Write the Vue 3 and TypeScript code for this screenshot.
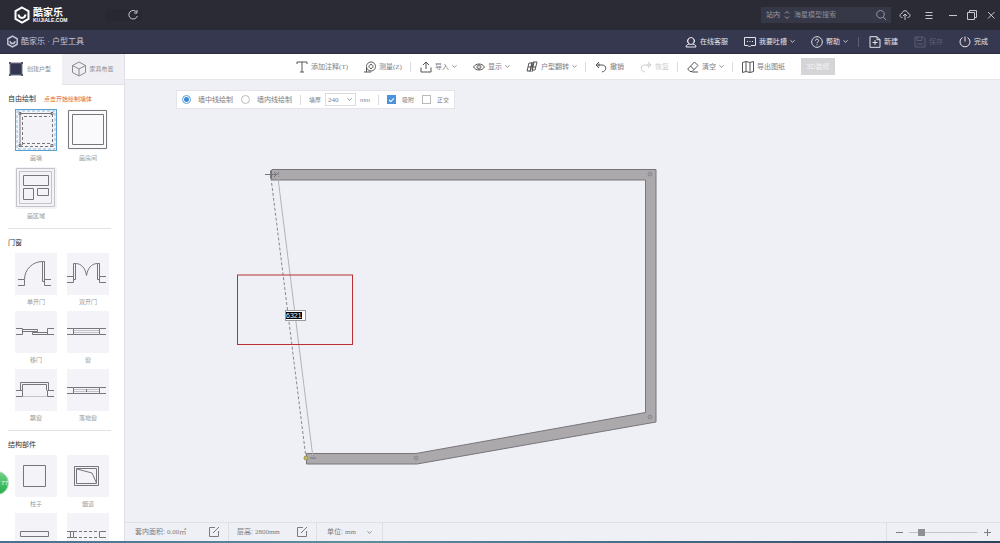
<script setup lang="ts">
import { onMounted, ref } from 'vue'

interface Action {
  id: string
  label?: string
  key?: string
  icon?: string
  menu?: boolean
  disabled?: boolean
  divider?: boolean
}

interface Part {
  label: string
  solid?: string
  dashed?: string
  soft?: string
  selected?: boolean
  plain?: boolean
}

interface Section {
  title: string
  hint?: string
  parts: Part[]
}

const headerActions: Action[] = [
  { id: 'service', label: '在线客服', icon: 'M3 4.500a3 3 0 0 1 6 0v1a3 3 0 0 1-6 0zM2.500 3.500v3M9.500 3.500v3M4.500 8C2 8.500 1 9.500 1 11h10c0-1.500-1-2.500-3.500-3' },
  { id: 'feedback', label: '我要吐槽', menu: true, icon: 'M.5 1.500h11v8H7l-1.500 1.500L4 9.500H.5zM3 5.500h1M5.500 5.500h1M8 5.500h1' },
  { id: 'help', label: '帮助', menu: true, icon: 'M6 .7a5.300 5.300 0 1 0 .01 0zM4.400 4.700c0-2 3.200-2 3.200 0 0 1.200-1.600 1.100-1.600 2.500M6 8.200v1' },
  { id: 'd', divider: true },
  { id: 'new', label: '新建', icon: 'M1 .7h7l3 3v7.600H1zM8 .7v3h3M3.500 6.500h5M6 4v5' },
  { id: 'save', label: '保存', disabled: true, icon: 'M1 1h8.500L11 2.500V11H1zM3 1v3.500h5V1M3 8h6' },
  { id: 'done', label: '完成', icon: 'M3.500 1.500a5 5 0 1 0 5 0M6 .5v5' },
]

const tools: Action[] = [
  { id: 'note', label: '添加注释', key: '(T)', icon: 'M1 3V1h10v2M6 1v10M4 11h4' },
  { id: 'measure', label: '测量', key: '(Z)', icon: 'M7 1a4.500 4.500 0 1 0 .01 0zM7 3.500a2 2 0 1 0 .01 0zM0 11h7M2.500 6v5' },
  { id: 'd1', divider: true },
  { id: 'import', label: '导入', menu: true, icon: 'M6 8V1M3 4l3-3 3 3M1 6.500V11h10V6.500' },
  { id: 'show', label: '显示', menu: true, icon: 'M.5 6C3 2 9 2 11.500 6 9 10 3 10 .5 6zM6 4a2 2 0 1 0 .01 0zM6 5.500v1' },
  { id: 'flip', label: '户型翻转', menu: true, icon: 'M3 2h3L4 10H1zM7 1h4L9 9H6zM6 1L4 11M8 1L6 11M2 6h8' },
  { id: 'd2', divider: true },
  { id: 'undo', label: '撤销', icon: 'M4 1L1 4l3 3M1 4h6c5 0 5 6 0 7M4 2.500V5.500' },
  { id: 'redo', label: '恢复', disabled: true, icon: 'M8 1l3 3-3 3M11 4H5c-5 0-5 6 0 7M8 2.500V5.500' },
  { id: 'd3', divider: true },
  { id: 'clear', label: '清空', menu: true, icon: 'M7.500 1L11 4.500 5 10.500H3L.7 8zM3.500 5L7 8.500M5 11h6' },
  { id: 'd4', divider: true },
  { id: 'export', label: '导出图纸', icon: 'M.5 1.500l3.500-1 4 1 3.500-1v10l-3.500 1-4-1-3.500 1zM4 .5v10M8 1.500v10' },
]

const sections: Section[] = [
  {
    title: '自由绘制',
    hint: '点击开始绘制墙体',
    parts: [
      { label: '画墙', selected: true, solid: 'M5 37V4.500h32M4 3.500h2v2h-2zM36 3.500h2v2h-2zM4 35.500h2v2h-2zM36 35.500h2v2h-2z', dashed: 'M7.500 36V7.500H35M35 34.500H7M37.500 5v31M5 37.500h32' },
      { label: '画房间', plain: true, solid: 'M1.500 1.500h38v38h-38zM5.500 5.500h31v30h-31z' },
      { label: '画区域', soft: 'M1.500 1.500h38v38h-38zM4.500 4.500h32v32h-32z', solid: 'M8.500 8.500h25v10h-25zM8.500 21.500h10v11h-10zM22.500 21.500h11v7h-11z' },
    ],
  },
  {
    title: '门窗',
    parts: [
      { label: '单开门', solid: 'M3 26.500h6.500v6H3M36 26.500h-6.500v6H36M9.500 26.500c0-10 8-18 18-18M27.500 8.500h2v20h-2z' },
      { label: '双开门', solid: 'M0 23.500h6.500v6H0M39 23.500h-6.500v6H39M6.500 10.500h2v16h-2zM30.500 10.500h2v16h-2zM8.500 10.500c6 0 10 5 11 12 1-7 5-12 11-12' },
      { label: '移门', solid: 'M1 17.500h6.500v6H1M39 17.500h-6.500v6H39M7.500 18.500h15v2h-15zM17.500 21.500h15v2h-15z' },
      { label: '窗', solid: 'M0 17.500h6.500v6H0M39 17.500h-6.500v6H39M6.500 17.500h26M6.500 23.500h26', soft: 'M7 19.500h25M7 21.500h25' },
      { label: '飘窗', solid: 'M1 21.500h6.500v6H1M39 21.500h-6.500v6H39M5.500 21.500v-8h28v8M7.500 21.500v-6h24v6', soft: 'M8 27.500h24' },
      { label: '落地窗', solid: 'M0 18.500h6.500v6H0M39 18.500h-6.500v6H39M6.500 18.500h26M6.500 24.500h26M19.500 20v3', soft: 'M7 20.500h25M7 22.500h25' },
    ],
  },
  {
    title: '结构部件',
    parts: [
      { label: '柱子', solid: 'M8.500 10.500h22v21h-22z' },
      { label: '烟道', solid: 'M7.500 11.500h24v19h-24zM9.500 13.500h20v15h-20zM10 14l15 4 4.500 10' },
      { label: '', solid: 'M5.500 18.500h28v5h-28z' },
      { label: '', solid: 'M0 18.500h6.500v6H0M3.500 18.500v6M39 18.500h-6.500v6H39', dashed: 'M7 18.500h25M7 24.500h25' },
    ],
  },
]

const lengthInput = ref<HTMLInputElement | null>(null)
const wallLength = ref('6321')
const drawMode = ref('center')
const snap = ref(true)
const ortho = ref(false)
const zoomLevel = ref(15)

onMounted(() => {
  lengthInput.value?.focus()
  lengthInput.value?.select()
})
</script>

<template>
  <div class="app">
    <header class="topbar">
      <div class="brand">
        <svg class="brand-mark" viewBox="0 0 18 18"><path d="M9 1.500l6.500 3.700v7.600L9 16.500l-6.500-3.700V5.200z" /><path d="M5.500 8.500c.5 4.500 6.500 4.500 7 0" /></svg>
        <div class="brand-text"><strong>酷家乐</strong><span>KUJIALE.COM</span></div>
      </div>
      <div class="nav">
        <button class="icon-btn" aria-label="刷新"><svg viewBox="0 0 12 12"><path d="M9.500 3a4.300 4.300 0 1 0 .8 4M10 1v3H7" /></svg></button>
      </div>
      <div class="search">
        <select aria-label="搜索范围"><option>站内</option></select>
        <svg class="updown" viewBox="0 0 6 10"><path d="M1 3.500l2-2 2 2M1 6.500l2 2 2-2" /></svg>
        <input type="text" placeholder="海星模型搜索" aria-label="搜索">
        <button class="icon-btn" aria-label="查找"><svg viewBox="0 0 12 12"><path d="M5.500 1.500a3.800 3.800 0 1 0 .01 0zM8.300 8l2.700 3" /></svg></button>
      </div>
      <div class="window-buttons">
        <button class="icon-btn wide" aria-label="上传"><svg viewBox="0 0 12 12"><path d="M3.500 8.500C0 8.500.5 4.500 3 4.500 3.500.8 8.500.8 9 4.500c2.500 0 3 4-.5 4M6 11V5M4 7l2-2 2 2" /></svg></button>
        <button class="icon-btn wide" aria-label="菜单"><svg viewBox="0 0 12 12"><path d="M2.500 3.500h7M2.500 6.500h7M2.500 9.500h7" /></svg></button>
        <button class="icon-btn" aria-label="最小化"><svg viewBox="0 0 12 12"><path d="M2 6.500h8" /></svg></button>
        <button class="icon-btn" aria-label="还原"><svg viewBox="0 0 12 12"><path d="M1.500 3.500h7v7h-7zM3.500 3.500v-2h7v7h-2" /></svg></button>
        <button class="icon-btn" aria-label="关闭"><svg viewBox="0 0 12 12"><path d="M3 3l6.500 6.500M9.500 3L3 9.500" /></svg></button>
      </div>
    </header>

    <div class="titlebar">
      <h1>
        <svg class="title-mark" viewBox="0 0 18 18"><path d="M9 1.500l6.500 3.700v7.600L9 16.500l-6.500-3.700V5.200z" /><path d="M5.500 8.500c.5 4.500 6.500 4.500 7 0" /></svg>
        <span>酷家乐 · 户型工具</span>
      </h1>
      <nav class="actions">
        <template v-for="a in headerActions" :key="a.id">
          <i v-if="a.divider" class="divider" />
          <button v-else class="action" :disabled="a.disabled">
            <svg class="icon" viewBox="0 0 12 12"><path :d="a.icon" /></svg>
            <span>{{ a.label }}</span>
            <svg v-if="a.menu" class="chevron" viewBox="0 0 6 6"><path d="M.5 1.500L3 4l2.500-2.500" /></svg>
          </button>
        </template>
      </nav>
    </div>

    <div class="workspace">
      <aside class="sidebar">
        <div class="tabs">
          <button class="tab active">
            <svg viewBox="0 0 16 16"><path class="room" d="M2 2h12v12H2z" /><path class="corners" d="M1 1h2v2H1zM13 1h2v2h-2zM1 13h2v2H1zM13 13h2v2h-2z" /></svg>
            <span>创建户型</span>
          </button>
          <button class="tab">
            <svg viewBox="0 0 16 16"><path class="cube" d="M8 1l6.500 3.500v7L8 15l-6.500-3.500v-7zM1.500 4.500L8 8l6.500-3.500M8 8v7" /></svg>
            <span>家具布置</span>
          </button>
        </div>
        <section v-for="s in sections" :key="s.title" class="section">
          <div class="section-head"><h2>{{ s.title }}</h2><span v-if="s.hint" class="hint">{{ s.hint }}</span></div>
          <div class="parts">
            <button v-for="(p, i) in s.parts" :key="i" class="part">
              <svg viewBox="0 0 42 42" :class="{ plain: p.plain }">
                <rect v-if="p.selected" class="outline" x=".5" y=".5" width="41" height="41" />
                <rect v-if="p.selected" class="outline-dash" x="2" y="2" width="38" height="38" />
                <path v-if="p.soft" class="soft" :d="p.soft" />
                <path v-if="p.solid" :d="p.solid" />
                <path v-if="p.dashed" class="dashed" :d="p.dashed" />
              </svg>
              <span>{{ p.label }}</span>
            </button>
          </div>
        </section>
        <div class="ball">77</div>
      </aside>

      <main class="main">
        <div class="toolbar">
          <template v-for="t in tools" :key="t.id">
            <i v-if="t.divider" class="divider" />
            <button v-else class="tool" :disabled="t.disabled">
              <svg class="icon" viewBox="0 0 12 12"><path :d="t.icon" /></svg>
              <span>{{ t.label }}<b v-if="t.key">{{ t.key }}</b></span>
              <svg v-if="t.menu" class="chevron" viewBox="0 0 6 6"><path d="M.5 1.500L3 4l2.500-2.500" /></svg>
            </button>
          </template>
          <button class="decorate" disabled>3D装修</button>
        </div>

        <div class="canvas">
          <svg class="plan" viewBox="125 80 875 442" preserveAspectRatio="xMinYMin slice">
            <path class="wall" d="M272 169.500H656V422L417 464H306.500V453.500H416L645.500 412.500V180H272L270.500 178V171z" />
            <g class="joint">
              <circle cx="650" cy="174" r="2" /><circle cx="650" cy="417" r="2" /><circle cx="416" cy="458" r="2" />
            </g>
            <path class="cursor" d="M265 174.500h14M271.500 170v9M274 172l5 5M279 172l-5 5M310 458h6M313 455v4" />
            <path class="guide-dash" d="M271 178L306 458" />
            <path class="guide" d="M277.500 174L313 458" />
            <circle class="anchor" cx="306" cy="458" r="2" />
            <rect class="mark" x="237.500" y="275" width="115" height="69.500" />
          </svg>
          <input ref="lengthInput" v-model="wallLength" class="length" type="text" aria-label="墙体长度">

          <div class="options">
            <label class="radio"><input v-model="drawMode" type="radio" name="mode" value="center"><span>墙中线绘制</span></label>
            <label class="radio"><input v-model="drawMode" type="radio" name="mode" value="inner"><span>墙内线绘制</span></label>
            <i class="divider" />
            <label class="thickness">
              <span>墙厚</span>
              <span class="select-box">
                <select><option>240</option></select>
                <svg class="chevron" viewBox="0 0 6 6"><path d="M.5 1.500L3 4l2.500-2.500" /></svg>
              </span>
              <span>mm</span>
            </label>
            <i class="divider" />
            <label class="check"><input v-model="snap" type="checkbox"><span>吸附</span></label>
            <label class="check"><input v-model="ortho" type="checkbox"><span>正交</span></label>
          </div>
        </div>

        <footer class="status">
          <div class="cell area">
            <span>套内面积: <b>0.00㎡</b></span>
            <button class="icon-btn" aria-label="编辑面积"><svg viewBox="0 0 12 12"><path d="M7 1.500H1.500v9h9V5M5 7l6-6" /></svg></button>
          </div>
          <div class="cell height">
            <span>层高: <b>2800mm</b></span>
            <button class="icon-btn" aria-label="编辑层高"><svg viewBox="0 0 12 12"><path d="M7 1.500H1.500v9h9V5M5 7l6-6" /></svg></button>
          </div>
          <label class="cell units">
            <span>单位:</span>
            <select><option>mm</option></select>
            <svg class="chevron" viewBox="0 0 6 6"><path d="M.5 1.500L3 4l2.500-2.500" /></svg>
          </label>
          <div class="zoom">
            <button class="icon-btn" aria-label="缩小"><svg viewBox="0 0 12 12"><path d="M3 6.500h7" /></svg></button>
            <input v-model="zoomLevel" type="range" min="0" max="100" aria-label="缩放">
            <button class="icon-btn" aria-label="放大"><svg viewBox="0 0 12 12"><path d="M3 6.500h7M6.500 3v7" /></svg></button>
          </div>
        </footer>
      </main>
    </div>
    <div class="edge" />
  </div>
</template>

<style>
body {
  margin: 0;
  overflow: hidden;
}
</style>

<style scoped>
.app {
  display: flex;
  flex-direction: column;
  height: 100vh;
  overflow: hidden;
  background: #eff0f5;
  color: #7c7c80;
  font-family: "Liberation Sans", "Noto Sans CJK SC", sans-serif;
  font-size: 7px;
  line-height: 10px;
}
button,
input,
select {
  margin: 0;
  padding: 0;
  border: 0;
  border-radius: 0;
  background: none;
  color: inherit;
  font: inherit;
  appearance: none;
  outline: none;
}
svg {
  display: block;
  flex: none;
  fill: none;
  stroke: currentColor;
  stroke-width: 1;
}
span {
  white-space: nowrap;
}
.icon-btn svg,
.icon {
  width: 12px;
  height: 12px;
}
.chevron {
  width: 5px;
  height: 5px;
}
.divider {
  flex: none;
  width: 1px;
  height: 10px;
  background: #dcdce0;
}

.topbar {
  display: flex;
  flex: none;
  align-items: center;
  height: 30px;
  padding: 0 3px 0 13px;
  background: #2a2b35;
  color: #c6c7ce;
}
.brand {
  display: flex;
  align-items: center;
  gap: 2px;
  color: #fff;
}
.brand-mark {
  width: 18px;
  height: 18px;
  stroke-width: 2;
}
.brand-text {
  display: flex;
  flex-direction: column;
}
.brand-text strong {
  font-size: 10px;
  line-height: 10px;
}
.brand-text span {
  font-size: 5px;
  font-weight: bold;
  line-height: 5px;
}
.nav {
  display: flex;
  justify-content: flex-end;
  width: 34px;
  margin-left: 38px;
  padding-right: 3px;
  background: #272832;
}
.search {
  display: flex;
  align-items: center;
  box-sizing: border-box;
  width: 130px;
  height: 16px;
  margin-left: auto;
  padding: 0 4px 0 5px;
  background: #363847;
  color: #9b9ca6;
}
.search select {
  width: 15px;
}
.updown {
  width: 6px;
  height: 10px;
  margin: 0 4px 0 3px;
}
.search input {
  flex: 1;
  min-width: 0;
}
.search input::placeholder {
  color: #8b8c97;
}
.window-buttons {
  display: flex;
  gap: 7px;
  padding-left: 8px;
}
.wide {
  padding-right: 5px;
}

.titlebar {
  display: flex;
  flex: none;
  align-items: center;
  justify-content: space-between;
  box-sizing: border-box;
  height: 24px;
  padding: 0 12px 0 6px;
  border-bottom: 1px solid #2b2d40;
  background: #36384f;
  color: #e4e5ec;
}
h1 {
  display: flex;
  align-items: center;
  gap: 2px;
  margin: 0;
  color: #c3c7d8;
  font-size: 8px;
  font-weight: normal;
}
.title-mark {
  width: 13px;
  height: 13px;
  stroke-width: 2;
}
.actions {
  display: flex;
  align-items: center;
  gap: 16px;
}
.actions .divider {
  margin: 0 -6px;
  background: #5b5d72;
}
.action,
.tool {
  display: flex;
  flex: none;
  align-items: center;
  gap: 3px;
}
.action:disabled {
  color: #5a5c72;
}

.workspace {
  display: flex;
  flex: 1;
  min-height: 0;
}
.sidebar {
  position: relative;
  flex: none;
  box-sizing: border-box;
  width: 125px;
  overflow: hidden;
  border-right: 1px solid #dfdfe6;
  background: #fff;
}
.tabs {
  display: flex;
  height: 31px;
}
.tab {
  display: flex;
  flex: 1;
  align-items: center;
  gap: 3px;
  padding-left: 9px;
  border-bottom: 1px solid #e3e3ea;
  background: #efeff4;
  color: #8a8a8e;
  font-size: 6px;
}
.tab.active {
  padding-left: 8px;
  border-color: #fff;
  background: #fff;
}
.tab svg {
  width: 16px;
  height: 16px;
}
.room {
  fill: #343750;
  stroke: #77798a;
}
.corners {
  fill: #55586c;
  stroke: none;
}
.section {
  margin: 0 13px 0 8px;
  padding: 3px 0;
  border-bottom: 1px solid #e2e2e6;
}
.section-head {
  display: flex;
  align-items: center;
  gap: 8px;
  height: 21px;
}
h2 {
  margin: 0;
  color: #333;
  font-size: 7px;
  font-weight: normal;
}
.hint {
  color: #e0662f;
  font-size: 6px;
}
.parts {
  display: grid;
  grid-template-columns: 42px 42px;
  gap: 0 10px;
  padding-left: 7px;
}
.part {
  display: flex;
  flex-direction: column;
  align-items: center;
  height: 58px;
  color: #999;
  font-size: 6px;
  line-height: 14px;
}
.part svg {
  width: 42px;
  height: 42px;
  background: #f4f3f7;
  color: #77767b;
}
.part svg.plain {
  background: #fafafc;
}
.soft {
  stroke: #c4c3c8;
}
.dashed {
  stroke-dasharray: 3 2;
}
.outline {
  stroke: #5b9fd0;
}
.outline-dash {
  stroke: #8fc0e2;
  stroke-dasharray: 3 2;
}
.ball {
  position: absolute;
  top: 417px;
  left: -15px;
  box-sizing: border-box;
  width: 24px;
  height: 24px;
  border: 1px solid #b7dcc0;
  border-radius: 50%;
  background: linear-gradient(#6fd184, #25ad4c);
  color: #fff;
  font-size: 6px;
  line-height: 22px;
  text-align: right;
}

.main {
  display: flex;
  flex: 1;
  flex-direction: column;
  min-width: 0;
}
.toolbar {
  display: flex;
  flex: none;
  align-items: center;
  justify-content: center;
  box-sizing: border-box;
  height: 26px;
  padding-right: 2px;
  border-bottom: 1px solid #e6e6ec;
  background: #fff;
}
.tool {
  padding: 0 8px;
}
.tool .icon {
  color: #555;
}
.toolbar .divider {
  margin-right: 1px;
}
.tool:disabled,
.tool:disabled .icon {
  color: #ccc;
}
b {
  font-family: "Liberation Serif", "Noto Sans CJK SC", serif;
  font-weight: normal;
}
.decorate {
  width: 34px;
  height: 17px;
  margin-left: 8px;
  background: #d5d4d7;
  color: #f3f3f5;
}

.canvas {
  position: relative;
  flex: 1;
  min-height: 0;
  overflow: hidden;
}
.plan {
  width: 100%;
  height: 100%;
}
.wall {
  fill: #aca9ad;
  stroke: #77757a;
}
.joint {
  fill: #a19ea3;
  stroke: #8b898e;
}
.cursor {
  stroke: #77757a;
}
.guide-dash {
  stroke: #88878b;
  stroke-dasharray: 3 2;
}
.guide {
  stroke: #b3b2b7;
}
.anchor {
  fill: #c7b956;
  stroke: #9d9657;
}
.mark {
  stroke: #b92f33;
}
.length {
  position: absolute;
  top: 230px;
  left: 160px;
  box-sizing: border-box;
  width: 21px;
  height: 11px;
  border: 1px solid #999;
  background: #fff;
  color: #000;
}
.length::selection {
  background: #000;
  color: #fff;
}
.options {
  position: absolute;
  top: 10px;
  left: 51px;
  display: flex;
  align-items: center;
  box-sizing: border-box;
  height: 19px;
  padding: 0 5px;
  border: 1px solid #e4e4ea;
  background: #fff;
}
.options label {
  display: flex;
  align-items: center;
}
.radio {
  gap: 7px;
  margin-right: 8px;
}
.radio input {
  box-sizing: border-box;
  width: 9px;
  height: 9px;
  border: 1px solid #bbb;
  border-radius: 50%;
}
.radio input:checked {
  border-color: #5a9fdc;
  background: radial-gradient(circle, #3b8ad4 2px, #fff 3px);
}
.thickness {
  gap: 4px;
  margin: 0 8px;
  font-size: 6px;
}
.select-box {
  display: flex;
  align-items: center;
  box-sizing: border-box;
  width: 31px;
  height: 13px;
  padding: 0 3px 0 2px;
  border: 1px solid #dcdce0;
  font-size: 7px;
}
.select-box select {
  flex: 1;
  min-width: 0;
  font-family: "Liberation Serif", serif;
}
.check {
  gap: 6px;
  margin-left: 8px;
  font-size: 6px;
}
.check input {
  display: grid;
  place-items: center;
  box-sizing: border-box;
  width: 9px;
  height: 9px;
  border: 1px solid #bbb;
}
.check input:checked {
  border-color: #4a94dc;
  background: #4a94dc;
}
.check input:checked::after {
  width: 4px;
  height: 2px;
  border: solid #fff;
  border-width: 0 0 1px 1px;
  content: "";
  transform: rotate(-45deg);
}

.status {
  display: flex;
  flex: none;
  align-items: stretch;
  box-sizing: border-box;
  height: 19px;
  border-top: 1px solid #e0e0e7;
}
.cell {
  display: flex;
  align-items: center;
  justify-content: space-between;
  box-sizing: border-box;
  padding: 0 8px 0 10px;
  border-right: 1px solid #dedee5;
}
.area {
  width: 104px;
}
.height {
  width: 88px;
  padding-left: 8px;
}
.units {
  width: 66px;
  padding-right: 10px;
}
.units select {
  width: 20px;
  font-family: "Liberation Serif", serif;
}
.zoom {
  display: flex;
  align-items: center;
  gap: 4px;
  margin-left: auto;
  padding: 0 7px 0 6px;
  border-left: 1px solid #dedee5;
}
.zoom input {
  width: 68px;
  height: 8px;
  background: linear-gradient(#c2c2c7, #c2c2c7) center / 100% 1px no-repeat;
}
.zoom input::-webkit-slider-thumb {
  width: 7px;
  height: 7px;
  background: #8f8f94;
  appearance: none;
}
.edge {
  flex: none;
  height: 2px;
  background: linear-gradient(90deg, #48718f, #5d8f9c 35%, #47738c 60%, #2d425c);
}
</style>
